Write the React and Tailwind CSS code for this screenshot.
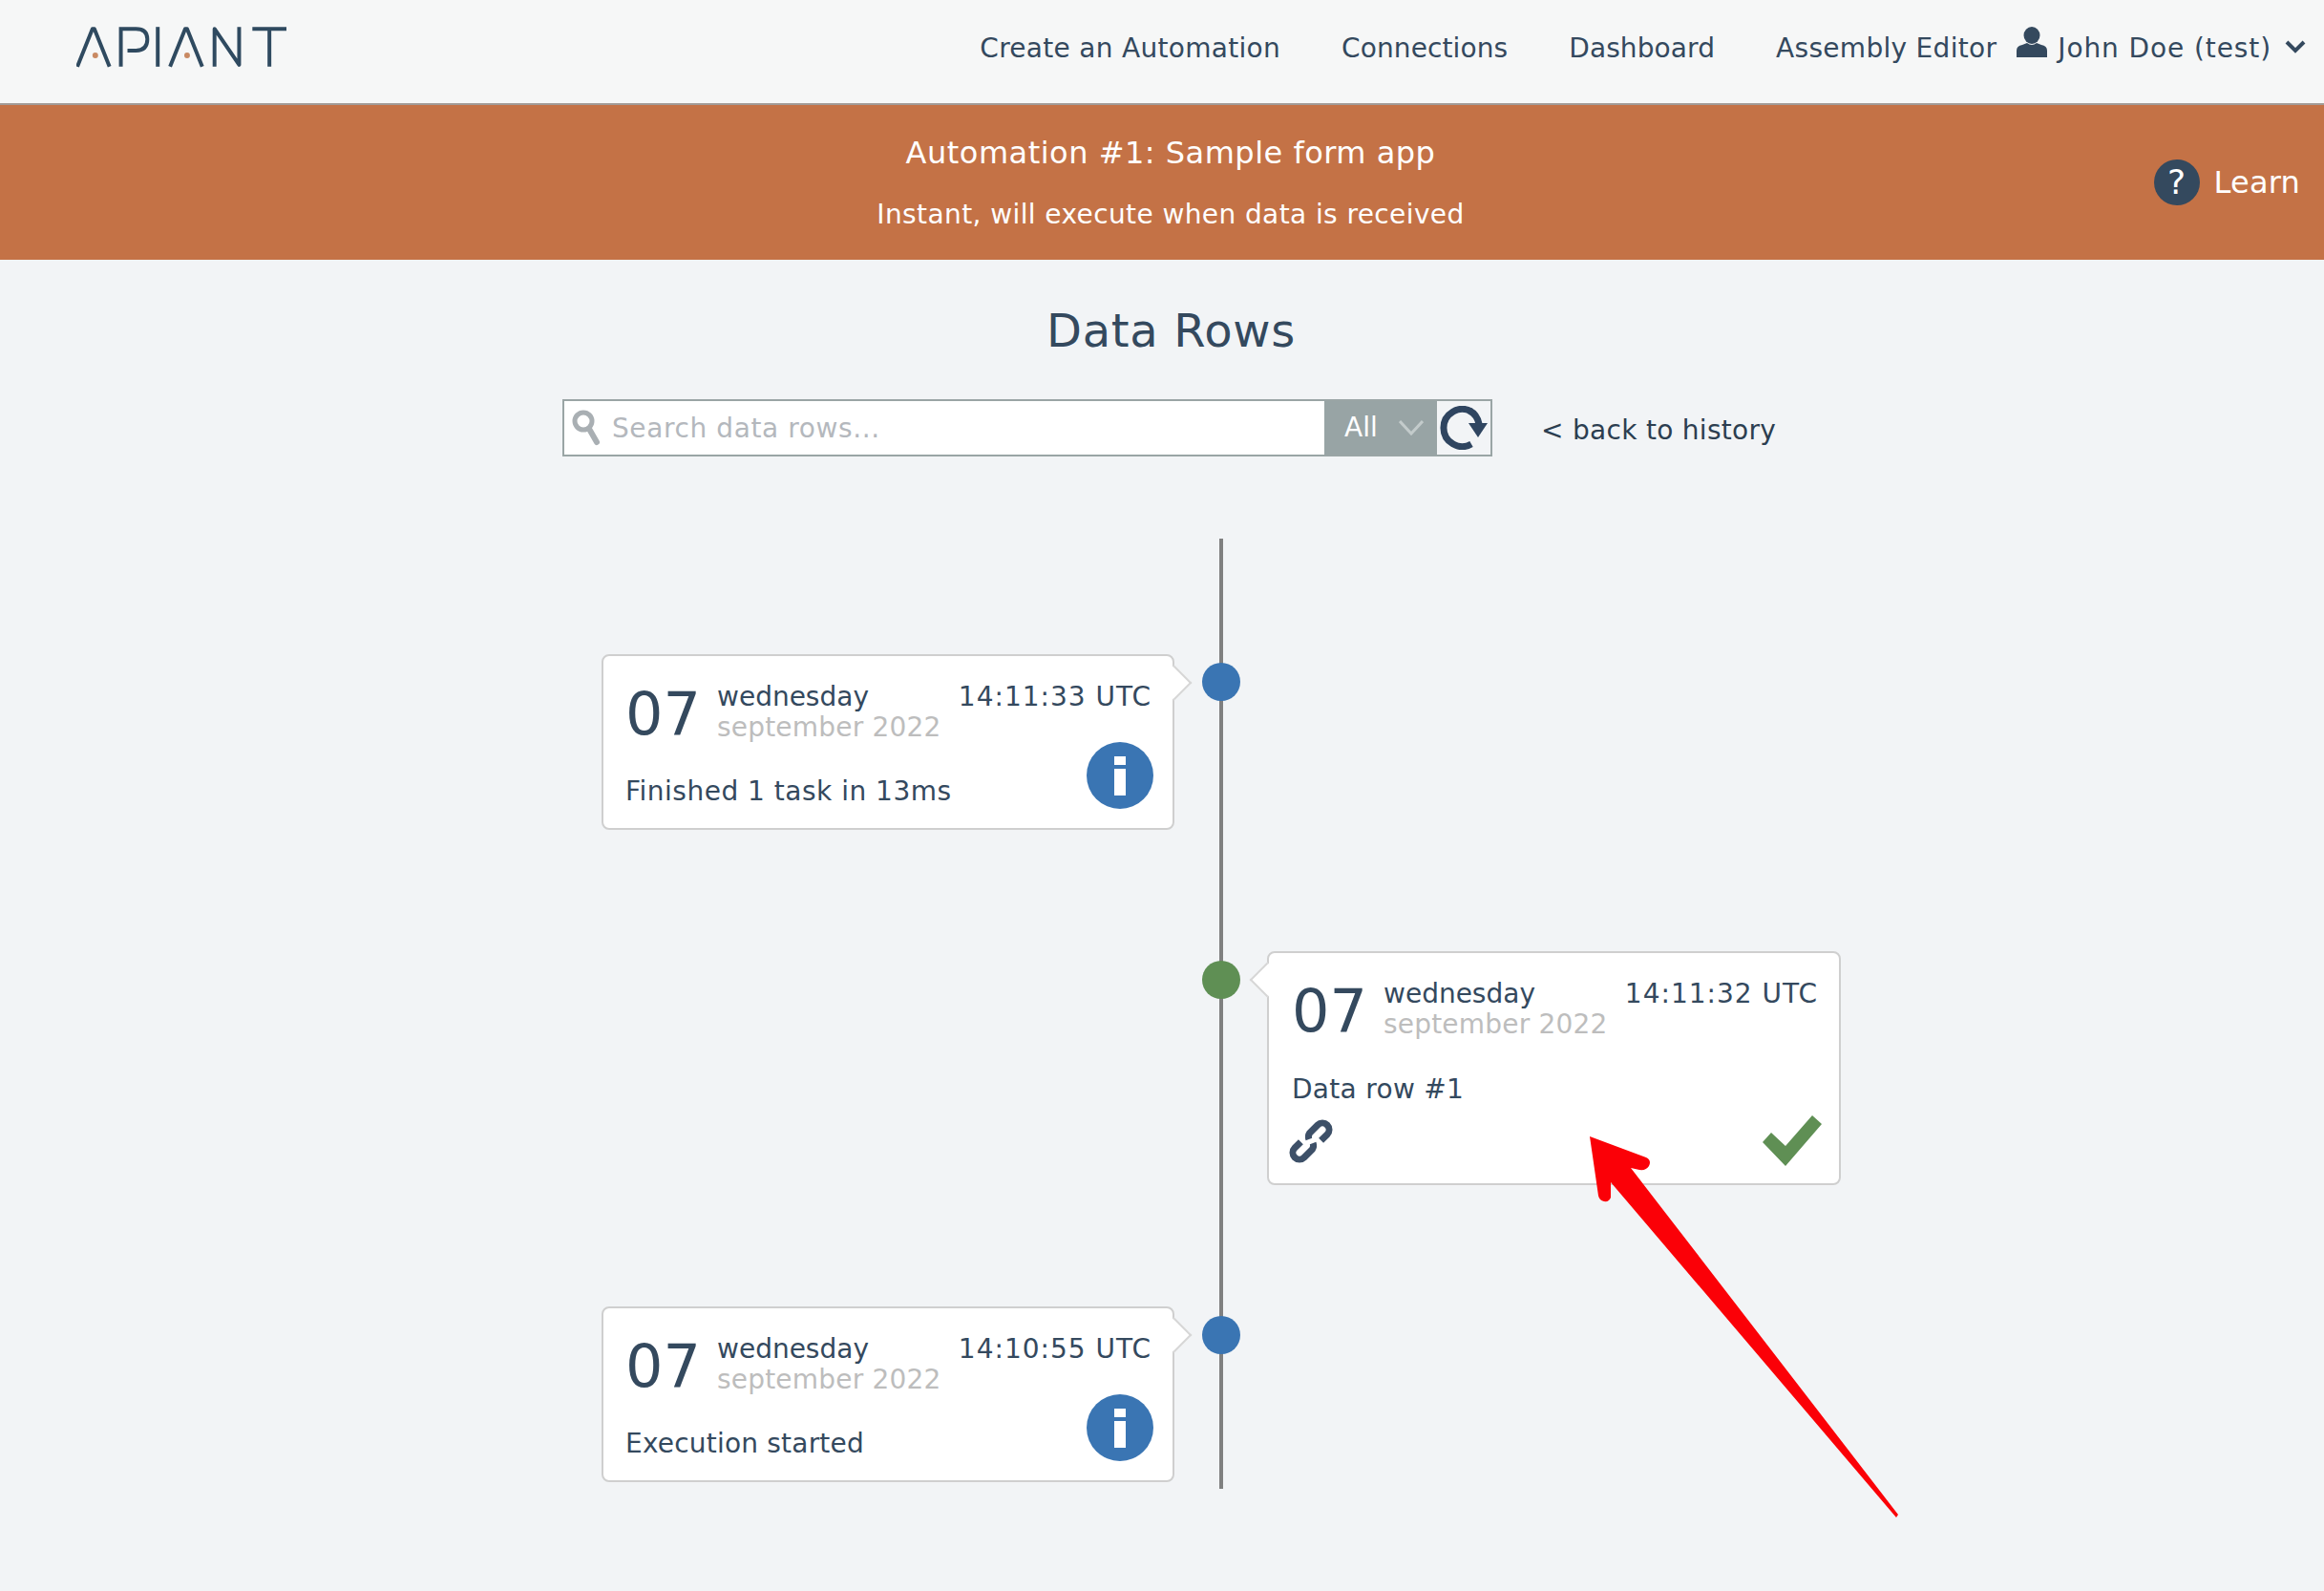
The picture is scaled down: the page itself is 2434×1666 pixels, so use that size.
import React from "react";

const Logo = () => (
  <svg width="220" height="44" viewBox="0 0 222 44" fill="none" stroke="#2f4a60" strokeWidth="4" className="block">
    <path d="M1 43 L17 3 h2 L35 43" strokeLinejoin="round" />
    <path d="M47 43 V3 H63 Q75 3 75 14 Q75 26 63 26 H54" />
    <path d="M86 1 V43" />
    <path d="M99 43 L115 3 h2 L133 43" strokeLinejoin="round" />
    <path d="M146 43 V3 L172 41 V1" strokeLinejoin="round" />
    <path d="M186 3 H222 M204 3 V43" />
    <circle cx="20" cy="31" r="3" fill="#c98a63" stroke="none" />
    <circle cx="117" cy="31" r="3" fill="#c98a63" stroke="none" />
  </svg>
);

const UserIcon = () => (
  <svg width="32" height="32" viewBox="0 0 32 32" fill="#34495e" className="block">
    <ellipse cx="16" cy="9" rx="8.5" ry="9" />
    <path d="M0 32 V25 Q0 20 6 19 L11 17 Q16 21 21 17 L26 19 Q32 20 32 25 V32 Z" />
  </svg>
);

const Chevron = () => (
  <svg width="22" height="14" viewBox="0 0 22 14" fill="none" stroke="#34495e" strokeWidth="4" className="block">
    <path d="M2 2 L11 11 L20 2" />
  </svg>
);

const SearchIcon = () => (
  <svg width="30" height="38" viewBox="0 0 30 38" fill="none" className="block">
    <circle cx="12" cy="12" r="9" stroke="#a9afb3" strokeWidth="5" />
    <path d="M18 20 L26 34" stroke="#a9afb3" strokeWidth="6" strokeLinecap="round" />
  </svg>
);

const RefreshIcon = () => (
  <svg width="50" height="46" viewBox="0 0 50 46" fill="none" className="block">
    <path d="M33 6 A19.5 19.5 0 1 0 33 40" stroke="#2f4560" strokeWidth="7" />
    <path d="M31 5 Q39 9 41 19" stroke="#2f4560" strokeWidth="7" />
    <path d="M30 18 H50 L40 33 Z" fill="#2f4560" />
  </svg>
);

const InfoIcon = () => (
  <svg width="70" height="70" viewBox="0 0 70 70" className="block">
    <circle cx="35" cy="35" r="35" fill="#3a75b3" />
    <rect x="29" y="15" width="12" height="9" fill="#fff" />
    <rect x="29" y="28" width="12" height="28" fill="#fff" />
  </svg>
);

const LinkIcon = () => (
  <svg width="50" height="48" viewBox="0 0 50 48" fill="none" stroke="#3d5068" strokeWidth="7" className="block">
    <g transform="rotate(-45 25 24)">
      <path d="M17 17 H8 A7 7 0 0 0 8 31 H20 A7 7 0 0 0 25 27" />
      <path d="M33 31 H42 A7 7 0 0 0 42 17 H30 A7 7 0 0 0 25 21" />
    </g>
  </svg>
);

const CheckIcon = () => (
  <svg width="62" height="54" viewBox="0 0 62 54" className="block">
    <path d="M0 28 L9 18 L24 32 L52 0 L62 9 L24 53 Z" fill="#5f8f54" />
  </svg>
);

const Card = ({ time, side, children }) => (
  <div className="relative border-2 border-[#cfcfcf] rounded-lg bg-white h-full">
    <div
      className={
        side === "left"
          ? "absolute -right-[15px] top-[15px] w-[26px] h-[26px] rotate-45 bg-white border-t-2 border-r-2 border-[#d6d6d6]"
          : "absolute -left-[15px] top-[15px] w-[26px] h-[26px] rotate-45 bg-white border-b-2 border-l-2 border-[#d6d6d6]"
      }
    />
    <div className={`relative flex pr-[22px] pt-[27px] ${side === "left" ? "pl-[23px]" : "pl-[24px]"}`}>
      <div className="text-[62px] leading-[72px] text-[#34495e] w-[96px] -mt-[2px]">07</div>
      <div className="flex-1 text-[28px] leading-[32px]">
        <div className="text-[#34495e]">wednesday</div>
        <div className="text-[#bdbdbd] tracking-[0.2px]">september 2022</div>
      </div>
      <div className="text-[28px] leading-[32px] text-[#34495e] tracking-[1px]">{time}</div>
    </div>
    <div className={`relative pr-[20px] ${side === "left" ? "pl-[23px]" : "pl-[24px]"}`}>{children}</div>
  </div>
);

const Dot = ({ top, color }) => (
  <div className={`absolute left-[-18px] w-[40px] h-[40px] rounded-full ${top} ${color}`} />
);

export default function App() {
  return (
    <div
      className="relative w-[2434px] h-[1666px] overflow-hidden bg-[#f2f4f6] text-[#34495e]"
      style={{ fontFamily: '"DejaVu Sans", Verdana, sans-serif' }}
    >
      <header className="h-[110px] bg-[#f6f7f7] border-b-2 border-[#a29a96] flex items-start pl-[80px] pr-[19px]">
        <div className="mt-[27px]"><Logo /></div>
        <nav className="ml-auto flex items-start text-[28px] leading-[34px] mt-[34px]">
          <span className="mr-[64px] tracking-[0.3px]">Create an Automation</span>
          <span className="mr-[64px] tracking-[0.1px]">Connections</span>
          <span className="mr-[64px] tracking-[0.1px]">Dashboard</span>
          <span className="mr-[21px] tracking-[0.3px]">Assembly Editor</span>
          <span className="mr-[11px] -mt-[6px]"><UserIcon /></span>
          <span className="mr-[14px] tracking-[0.9px]">John Doe (test)</span>
          <span className="mt-[8px]"><Chevron /></span>
        </nav>
      </header>

      <section className="h-[162px] bg-[#c47246] text-white relative flex flex-col w-full">
        <div className="w-[2452px] text-center text-[32px] leading-[40px] pt-[30px] tracking-[0.5px]">Automation #1: Sample form app</div>
        <div className="w-[2452px] text-center text-[28px] leading-[34px] pt-[28px] tracking-[0.4px]">Instant, will execute when data is received</div>
        <div className="absolute right-[25px] top-[57px] flex items-center gap-[15px]">
          <div className="w-[48px] h-[48px] rounded-full bg-[#34495e] flex items-center justify-center text-[36px] leading-none">?</div>
          <span className="text-[32px] leading-[40px] tracking-[0.2px]">Learn</span>
        </div>
      </section>

      <main className="pl-[589px]">
        <h1 className="w-[1275px] text-center text-[48px] leading-[60px] pt-[44px] tracking-[0.7px] text-[#34495e]">Data Rows</h1>

        <div className="mt-[42px] flex items-center">
          <div className="w-[974px] h-[60px] border-2 border-[#9aa5a5] bg-white flex">
            <div className="flex-1 flex items-center pl-[8px] gap-[12px]">
              <SearchIcon />
              <span className="text-[28px] text-[#b4b8bd] tracking-[0.6px] translate-y-[1px]">Search data rows...</span>
            </div>
            <div className="w-[118px] bg-[#98a4a5] flex items-center pl-[21px] gap-[22px] text-white text-[28px]">
              <span>All</span>
              <svg width="26" height="16" viewBox="0 0 26 16" fill="none" stroke="#c3cbcb" strokeWidth="3" className="block"><path d="M1 1 L13 14 L25 1" /></svg>
            </div>
            <div className="w-[56px] flex items-center justify-center bg-[#f2f4f6]"><RefreshIcon /></div>
          </div>
          <span className="ml-[51px] text-[28px] text-[#2c3e50] tracking-[0.3px] translate-y-[3px]">&lt; back to history</span>
        </div>

        <div className="relative mt-[86px] ml-[41px] w-[1298px] h-[995px] grid grid-cols-[600px_601px] gap-x-[97px] grid-rows-[184px_245px_184px] gap-y-[127px] pt-[121px]">
          <div className="absolute left-[647px] top-0 w-[4px] h-[995px] bg-[#808080]">
            <Dot top="top-[130px]" color="bg-[#3a75b3]" />
            <Dot top="top-[442px]" color="bg-[#5f8f54]" />
            <Dot top="top-[814px]" color="bg-[#3a75b3]" />
          </div>

          <Card time="14:11:33 UTC" side="left">
            <div className="flex items-start justify-between">
              <span className="text-[28px] leading-[34px] mt-[28px] tracking-[0.5px]">Finished 1 task in 13ms</span>
              <span className="-mt-[7px] mr-[0px]"><InfoIcon /></span>
            </div>
          </Card>
          <div />
          <div />
          <Card time="14:11:32 UTC" side="right">
            <div className="text-[28px] leading-[34px] mt-[29px] tracking-[0.3px]">Data row #1</div>
            <div className="flex items-start justify-between mt-[13px] -ml-[5px]">
              <LinkIcon />
              <span className="-mt-[3px] -mr-[2px]"><CheckIcon /></span>
            </div>
          </Card>
          <Card time="14:10:55 UTC" side="left">
            <div className="flex items-start justify-between">
              <span className="text-[28px] leading-[34px] mt-[28px] tracking-[0.2px]">Execution started</span>
              <span className="-mt-[7px] mr-[0px]"><InfoIcon /></span>
            </div>
          </Card>
          <div />
        </div>
      </main>

      <svg width="340" height="410" viewBox="1660 1185 340 410" className="absolute left-[1660px] top-[1185px] pointer-events-none">
        <path
          d="M1665 1190 L1724 1212 Q1730 1215 1727 1221 Q1724 1226 1717 1225 L1708 1223 L1988 1586 L1986 1589 L1687 1238 L1687 1254 Q1685 1259 1680 1258 Q1675 1257 1674 1252 Z"
          fill="#fb0007"
        />
      </svg>
    </div>
  );
}
